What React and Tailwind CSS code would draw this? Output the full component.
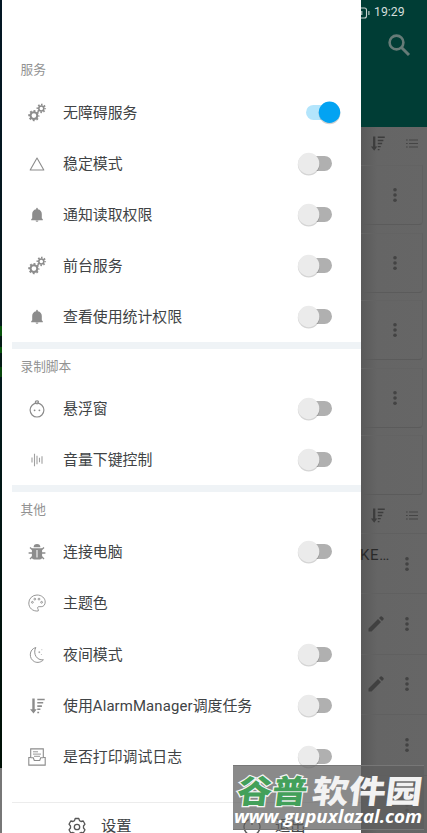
import React from "react";

function Cog({ cx, cy, r }) {
  const c = 2 * Math.PI * (r + 1.3);
  return (
    <g fill="none" stroke="#8c8c8c">
      <circle cx={cx} cy={cy} r={r} strokeWidth={r * 0.62} />
      <circle cx={cx} cy={cy} r={r + 1.3} strokeWidth="1.9" strokeDasharray={`${c / 16} ${c / 16}`} strokeDashoffset={c / 32} />
    </g>
  );
}

function GearsIcon() {
  return (
    <svg className="overflow-visible" width="18" height="18" viewBox="0 0 18 18">
      <Cog cx={5.9} cy={11.6} r={3.4} />
      <Cog cx={13.3} cy={4.4} r={2.5} />
    </svg>
  );
}

function TriangleIcon() {
  return (
    <svg width="18" height="18" viewBox="0 0 18 18" fill="none" stroke="#8c8c8c" strokeWidth="1.1" strokeLinejoin="round">
      <path d="M9 3 15.8 15H2.2z" />
    </svg>
  );
}

function BellIcon() {
  return (
    <svg width="18" height="18" viewBox="0 0 18 18" fill="#8c8c8c">
      <path d="M8.2 3.2V2.6a.8.8 0 0 1 1.6 0v.6c2.600.5 4 2.300 4 4.700v4.300l1 1.100v.9H3.200v-.9l1-1.100V7.900c0-2.400 1.400-4.200 4-4.700z" />
      <path d="M7.600 14.600h2.800a1.400 1.200 0 0 1-2.800 0z" />
    </svg>
  );
}

function FaceIcon() {
  return (
    <svg width="18" height="18" viewBox="0 0 18 18" fill="none" stroke="#8c8c8c" strokeWidth="1.2">
      <circle cx="9" cy="10.100" r="6.900" />
      <path d="M9.200 3.800C6.500 3.500 6.800.8 9 .8c1.600 0 2 1.500.8 1.900" strokeLinecap="round" />
      <circle cx="6.600" cy="10.300" r=".9" fill="#8c8c8c" stroke="none" />
      <circle cx="11.400" cy="10.300" r=".9" fill="#8c8c8c" stroke="none" />
    </svg>
  );
}

function WaveIcon() {
  return (
    <svg width="18" height="18" viewBox="0 0 18 18" stroke="#a0a0a0" strokeWidth="1.100">
      <path d="M4 6.500v5M6.500 2.800v12.400M9 4.800v8.400M11.500 6.800v4.400M14 5.300v7.400" />
    </svg>
  );
}

function BugIcon() {
  return (
    <svg width="18" height="18" viewBox="0 0 18 18">
      <path d="M5.600 4.300a3.400 3.400 0 0 1 6.800 0z" fill="#8c8c8c" />
      <path fillRule="evenodd" d="M3.900 5.300h10.200V14q0 2.500-2.500 2.500H6.400Q3.900 16.500 3.900 14zM8.500 7v7.500h1V7z" fill="#8c8c8c" />
      <path d="M4.500 6.800 2 4.500M4.500 10H.6M4.500 13.500 2 16M13.500 6.800 16 4.500M13.500 10h3.900M13.500 13.500 16 16" stroke="#8c8c8c" strokeWidth="1.400" fill="none" />
    </svg>
  );
}

function PaletteIcon() {
  return (
    <svg width="18" height="18" viewBox="0 0 18 18" fill="none" stroke="#8c8c8c" strokeWidth=".9">
      <path d="M10.200 17C4.500 17.500.8 13.900.8 9A8.200 8 0 0 1 9 1c4.600 0 8.200 3.100 8.200 7 0 2.700-1.600 4.700-4 4.700-1.800 0-3.300-.4-3.600.9-.3 1.200 1.400 2 .6 3.400z" />
      <g strokeWidth=".9">
        <circle cx="4.400" cy="8.300" r=".9" />
        <circle cx="6.800" cy="5.100" r=".9" />
        <circle cx="11" cy="5.100" r=".9" />
        <circle cx="13.600" cy="8.300" r=".9" />
      </g>
    </svg>
  );
}

function MoonIcon() {
  return (
    <svg width="18" height="18" viewBox="0 0 18 18" fill="none" stroke="#8c8c8c" strokeWidth=".95" strokeLinejoin="round">
      <path d="M7.800 1.500C.9 3.300.5 12.700 6.500 15.700c3 1.400 6.700.6 8.900-1.900-6.600.9-10.800-6.100-7.600-12.300z" />
      <path d="M11.300 5.300v1.800M10.400 6.200h1.800M13.800 3.300v.9M13.400 8v.9" strokeWidth=".6" />
    </svg>
  );
}

function SortIcon({ color = "#8c8c8c", size = 18 }) {
  return (
    <svg width={size} height={size} viewBox="0 0 18 18" fill={color}>
      <path d="M4.300 1.500h2.400v10.700h2L5.500 16.600 2 12.200h2.300z" />
      <path d="M9.300 1.700h7.400v1.600H9.300zM9.300 5h5.900v1.600H9.300zM9.300 8.300h4.600v1.600H9.300zM9.300 11.600h3.100v1.500H9.300zM9.300 14.700h1.800v1.500H9.300z" />
    </svg>
  );
}

function InboxIcon() {
  return (
    <svg width="18" height="18" viewBox="0 0 18 18" fill="none" stroke="#8c8c8c" strokeWidth="1.100">
      <path d="M2.700 9.500V.9h12.600v8.600" />
      <path d="M2.700 9.500H.8v7.600h16.400V9.500h-1.900M2.700 9.800h2.600l1 2.700h5.400l1-2.700h2.600" />
      <path d="M5 3.800h5M5 6.100h8M6 8.300h6" strokeWidth=".9" />
    </svg>
  );
}

function Dots() {
  return (
    <svg width="6" height="16" viewBox="0 0 6 16" fill="#434343">
      <circle cx="3" cy="2.700" r="1.800" />
      <circle cx="3" cy="8" r="1.800" />
      <circle cx="3" cy="13.300" r="1.800" />
    </svg>
  );
}

function Toggle({ on }) {
  return on ? (
    <svg className="mr-[17px]" width="44" height="30" viewBox="0 0 44 30">
      <rect x="6" y="6.900" width="30" height="15" rx="7.500" fill="#b3e5fc" />
      <circle cx="29.500" cy="15.300" r="10.900" fill="#000" opacity=".18" />
      <circle cx="29.500" cy="14.300" r="10.700" fill="#03a3f2" />
    </svg>
  ) : (
    <svg className="mr-[17px]" width="52" height="30" viewBox="0 0 52 30">
      <rect x="10" y="6.900" width="30" height="15" rx="7.500" fill="#b0b0b0" />
      <circle cx="16.700" cy="15.500" r="10.900" fill="#000" opacity=".17" />
      <circle cx="16.700" cy="14.500" r="10.700" fill="#ebebeb" />
    </svg>
  );
}

function Row({ icon, label, toggle = "off" }) {
  return (
    <div className="flex h-[51.2px] shrink-0 items-center pl-[26px]">
      {icon}
      <span className="ml-[17px] grow whitespace-nowrap text-[14.900px] leading-5 text-[#404345]">{label}</span>
      {toggle !== "none" && <Toggle on={toggle === "on"} />}
    </div>
  );
}

function Title({ children, className = "" }) {
  return <div className={`flex h-[35px] shrink-0 items-center pl-[18.500px] text-[12.700px] text-[#929292] ${className}`}>{children}</div>;
}

function Divider() {
  return <div className="-mt-px ml-[10px] h-[6.700px] shrink-0 bg-[#eff3f6]" />;
}

function ListHeader({ className }) {
  return (
    <div className={`flex shrink-0 items-center justify-between pl-2 pr-[9px] ${className}`}>
      <SortIcon color="#3d3d3d" size={17} />
      <svg width="12" height="9" viewBox="0 0 12 9" stroke="#454545" strokeWidth="1.200">
        <path d="M0 1h1.700M3 1H12M0 4.500h1.700M3 4.500H12M0 8h1.700M3 8H12" />
      </svg>
    </div>
  );
}

function Card({ menu = true }) {
  return (
    <div className="mb-[7.500px] mr-[4px] flex h-[60px] shrink-0 items-center justify-end rounded-br-sm border-b border-r border-t border-b-[#5b5b5b] border-r-[#606060] border-t-[#636363] pr-[24px]">
      {menu && <Dots />}
    </div>
  );
}

function FileRow({ text, edit }) {
  return (
    <div className="flex h-[60.400px] shrink-0 items-center justify-end border-t border-[#606060] pr-[17px]">
      {text && <span className="-ml-px mb-[17px] mr-auto whitespace-nowrap text-[15px] leading-5 tracking-[0.6px] text-[#2a2a2a]">{text}</span>}
      {edit && (
        <svg className="mr-[19px]" width="18" height="18" viewBox="0 0 18 18" fill="#404040">
          <path d="M1.500 13.500 11 4l3 3-9.500 9.500h-3zM12 3l1.500-1.500q.7-.6 1.400 0l1.600 1.600q.6.700 0 1.400L15 6z" />
        </svg>
      )}
      <Dots />
    </div>
  );
}

function Watermark() {
  return (
    <div className="absolute left-[233px] top-[765px] h-[65px] w-[191px] border-y border-[#777] bg-[rgba(94,94,94,0.73)]">
      <svg className="overflow-visible" width="191" height="64" viewBox="0 0 191 64" fontFamily="'Noto Sans CJK SC', sans-serif" fontWeight="900">
        <g transform="translate(3 37) skewX(-7)">
          <text x="0" y="0" fontSize="32" textLength="70" lengthAdjust="spacingAndGlyphs" fill="#43a05a" stroke="#f4f4f4" strokeWidth="2.400" paintOrder="stroke">谷普</text>
          <text x="75" y="0" fontSize="32" textLength="110" lengthAdjust="spacingAndGlyphs" fill="#f2f2f2">软件园</text>
        </g>
        <text x="1" y="57" fontSize="18" textLength="188" lengthAdjust="spacingAndGlyphs" fill="#fff" fontFamily="'Open Sans', sans-serif" fontStyle="italic" fontWeight="700">www.gupuxlazal.com</text>
      </svg>
    </div>
  );
}

export default function App() {
  return (
    <div className="relative flex h-[833px] w-[427px] overflow-hidden bg-[#666] font-['Roboto','Noto_Sans_CJK_SC',sans-serif]">
      <div className="flex w-[2px] shrink-0 flex-col">
        <div className="h-[326px] bg-linear-to-b from-[#031624] to-[#06191d]" />
        <div className="h-[10px] bg-[#07530b]" />
        <div className="h-[11px] bg-[#041a16]" />
        <div className="h-[6px] bg-[#07530b]" />
        <div className="h-[14px] bg-[#041a16]" />
        <div className="h-[10px] bg-[#07450b]" />
        <div className="h-[391px] bg-linear-to-b from-[#02191c] to-[#001006]" />
        <div className="grow bg-[#777]" />
      </div>

      <aside className="flex w-[359px] shrink-0 flex-col bg-white pt-[52px]">
        <Title className="pt-px">服务</Title>
        <Row icon={<GearsIcon />} label="无障碍服务" toggle="on" />
        <Row icon={<TriangleIcon />} label="稳定模式" />
        <Row icon={<BellIcon />} label="通知读取权限" />
        <Row icon={<GearsIcon />} label="前台服务" />
        <Row icon={<BellIcon />} label="查看使用统计权限" />
        <Divider />
        <Title>录制脚本</Title>
        <Row icon={<FaceIcon />} label="悬浮窗" />
        <Row icon={<WaveIcon />} label="音量下键控制" />
        <Divider />
        <Title>其他</Title>
        <Row icon={<BugIcon />} label="连接电脑" />
        <Row icon={<PaletteIcon />} label="主题色" toggle="none" />
        <Row icon={<MoonIcon />} label="夜间模式" />
        <Row icon={<SortIcon />} label={<>使用<span className="tracking-[0.130px]">AlarmManager</span>调度任务</>} />
        <Row icon={<InboxIcon />} label="是否打印调试日志" />
        <div className="ml-[10px] mt-[19.500px] flex h-[48px] shrink-0 border-t border-[#ececec] text-[15.300px] text-[#404345]">
          <div className="flex w-[173px] items-center pl-[55px]">
            <svg width="20" height="20" viewBox="0 0 20 20" fill="none" stroke="#555" strokeWidth="1.300" strokeLinejoin="round">
              <path d="M7.500 3.600 8.200 1.500h3.600l.7 2.100 1.500.9 2.200-.5L18 7.200l-1.500 1.800v2L18 12.800 16.200 16l-2.200-.5-1.500.9-.7 2.100H8.200l-.7-2.100-1.500-.9-2.200.5L2 12.800 3.500 11V9L2 7.200 3.800 4l2.200.5z" />
              <circle cx="10" cy="10" r="2.700" />
            </svg>
            <span className="ml-[14px]">设置</span>
          </div>
          <div className="flex items-center pl-[57px]">
            <svg width="20" height="20" viewBox="0 0 20 20" fill="none" stroke="#555" strokeWidth="1.300">
              <path d="M7 2.500a8 8 0 1 0 6 0M10 1v7" />
            </svg>
            <span className="ml-[13px]">退出</span>
          </div>
        </div>
      </aside>

      <main className="flex w-[66px] shrink-0 flex-col bg-linear-to-r from-[#5a5a5a] via-[#656565] via-25% to-[#666]">
        <header className="h-[127px] shrink-0 bg-[#003d35]">
          <div className="flex h-[25px] items-center text-[12.300px] text-[#d4dedc]">
            <svg width="9" height="12" viewBox="0 0 9 12" fill="none" stroke="#c8d4d1" strokeWidth="1.100">
              <path d="M0 1h3.500q2 0 2 2v6q0 2-2 2H0M.8 4v4M7.900 4v4" />
            </svg>
            <span className="ml-[4px]">19:29</span>
          </div>
          <svg className="ml-[26px] mt-[8px]" width="25" height="25" viewBox="0 0 25 25" fill="none" stroke="#667b77" strokeWidth="2.600">
            <circle cx="9.500" cy="9.500" r="6.900" />
            <path d="m14.500 14.500 7.500 7.500" strokeWidth="3" />
          </svg>
        </header>
        <ListHeader className="h-[38px] pb-[5px]" />
        <Card />
        <Card />
        <Card />
        <Card />
        <Card menu={false} />
        <ListHeader className="-mt-[7.500px] h-[38px] pt-[3px]" />
        <FileRow text="KE…" />
        <FileRow edit />
        <FileRow edit />
        <FileRow />
        <FileRow />
      </main>

      <Watermark />
    </div>
  );
}
